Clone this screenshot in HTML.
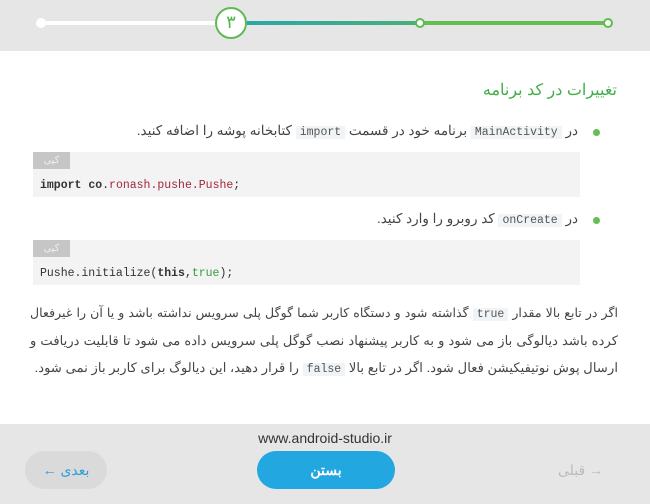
<!DOCTYPE html>
<html><head><meta charset="utf-8"><style>
*{margin:0;padding:0;box-sizing:border-box}
body{width:650px;height:504px;overflow:hidden;background:#fff;font-family:"Liberation Sans","Noto Sans CJK SC",sans-serif;position:relative}
.top{position:absolute;left:0;top:0;width:650px;height:51px;background:#e6e6e6}
.ln{position:absolute;height:4px;top:21px}
.dot{position:absolute;border-radius:50%}
.rtl{direction:rtl;position:absolute;right:33px;color:#444;font-size:13.5px}
.h{top:80px;color:#3fae49;font-size:16px}
.b{font-size:13.5px}
.b:before{content:"";position:absolute;right:-22px;top:6px;width:7px;height:7px;border-radius:50%;background:#63c050}
.code{font-family:"Liberation Mono",monospace;background:#f0f4f6;padding:0 4px;font-size:11.5px;color:#555}
.box{position:absolute;left:33px;width:547px;height:45px;background:#f3f3f3}
.copy{position:absolute;left:0;top:0;width:37px;height:17px;background:#c6c6c6;color:#eee;font-size:10px;text-align:center;line-height:17px}
.ct{position:absolute;left:7px;top:27px;font-family:"Liberation Mono",monospace;font-size:11.5px;color:#333}
.pl{position:absolute;left:30px;width:588px;direction:rtl;white-space:nowrap;font-size:13.2px;line-height:20px;color:#444;text-align:justify;text-align-last:justify}
</style></head><body>
<div class="top">
<div class="ln" style="left:41px;width:175px;background:#fff"></div>
<div class="ln" style="left:245px;width:175px;background:linear-gradient(90deg,#2aa7a8,#47b07a)"></div>
<div class="ln" style="left:420px;width:188px;background:#63c050"></div>
<div class="dot" style="left:36px;top:18px;width:10px;height:10px;background:#fff"></div>
<div class="dot" style="left:415px;top:18px;width:10px;height:10px;background:#fff;border:2px solid #5cbc50"></div>
<div class="dot" style="left:603px;top:18px;width:10px;height:10px;background:#fff;border:2px solid #5cbc50"></div>
<div class="dot" style="left:215px;top:7px;width:32px;height:32px;background:#fff;border:2px solid #5cbc50;color:#4cb84a;text-align:center;line-height:27px;font-size:18px">۳</div>
</div>
<div class="rtl h">تغییرات در کد برنامه</div>
<div class="rtl b" style="top:123px;right:72px">در <span class="code">MainActivity</span> برنامه خود در قسمت <span class="code">import</span> کتابخانه پوشه را اضافه کنید.</div>
<div class="box" style="top:152px"><div class="copy">کپی</div><div class="ct"><b>import</b> <b>co</b>.<span style="color:#a0283c">ronash.pushe.Pushe</span>;</div></div>
<div class="rtl b" style="top:211px;right:72px">در <span class="code">onCreate</span> کد روبرو را وارد کنید.</div>
<div class="box" style="top:240px"><div class="copy">کپی</div><div class="ct">Pushe.initialize(<b>this</b>,<span style="color:#3a9a3a">true</span>);</div></div>
<div class="pl" style="top:303px;font-size:12.6px">اگر در تابع بالا مقدار <span class="code">true</span> گذاشته شود و دستگاه کاربر شما گوگل پلی سرویس نداشته باشد و یا آن را غیرفعال</div>
<div class="pl" style="top:331px">کرده باشد دیالوگی باز می شود و به کاربر پیشنهاد نصب گوگل پلی سرویس داده می شود تا قابلیت دریافت و</div>
<div class="pl" style="top:358px;text-align-last:right;text-align:right">ارسال پوش نوتیفیکیشن فعال شود. اگر در تابع بالا <span class="code">false</span> را قرار دهید، این دیالوگ برای کاربر باز نمی شود.</div>
<div style="position:absolute;left:0;top:424px;width:650px;height:80px;background:#e6e6e6">
<div style="position:absolute;left:0;width:650px;top:6px;text-align:center;font-size:14px;color:#333">www.android-studio.ir</div>
<div style="position:absolute;left:257px;top:27px;width:138px;height:38px;border-radius:19px;background:#22a7e0;color:#fff;font-weight:bold;font-size:14px;text-align:center;line-height:38px;direction:rtl">بستن</div>
<div style="position:absolute;left:25px;top:27px;width:82px;height:38px;border-radius:19px;background:#dadada;color:#2a9fd8;font-size:14px;text-align:center;line-height:38px">← بعدی</div>
<div style="position:absolute;left:558px;top:27px;width:60px;height:38px;color:#bbb;font-size:14px;line-height:38px">قبلی →</div>
</div>
</body></html>
